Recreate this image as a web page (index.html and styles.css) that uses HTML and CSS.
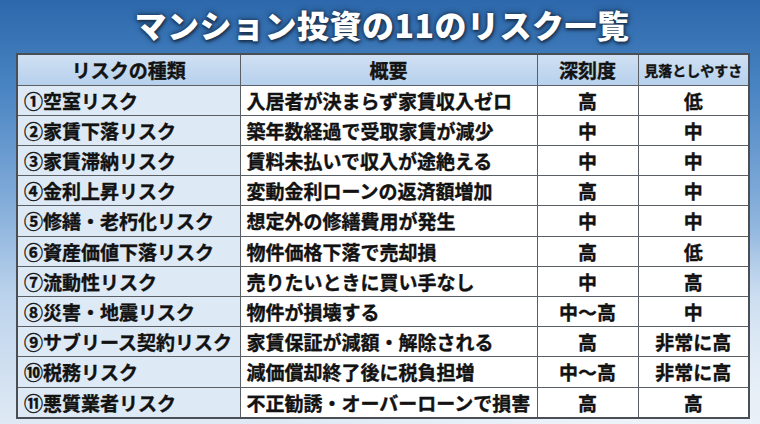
FILE: index.html
```html
<!DOCTYPE html>
<html lang="ja">
<head>
<meta charset="utf-8">
<link rel="stylesheet" href="styles.css">
</head>
<body>
<div class="page">
  <h1 class="title">マンション投資の11のリスク一覧</h1>
  <table class="risk">
    <colgroup>
      <col class="w1"><col class="w2"><col class="w3"><col class="w4">
    </colgroup>
    <thead>
      <tr>
        <th>リスクの種類</th>
        <th>概要</th>
        <th>深刻度</th>
        <th class="small">見落としやすさ</th>
      </tr>
    </thead>
    <tbody>
      <tr><td class="c1">①空室リスク</td><td class="c2">入居者が決まらず家賃収入ゼロ</td><td class="c3">高</td><td class="c4">低</td></tr>
      <tr><td class="c1">②家賃下落リスク</td><td class="c2">築年数経過で受取家賃が減少</td><td class="c3">中</td><td class="c4">中</td></tr>
      <tr><td class="c1">③家賃滞納リスク</td><td class="c2">賃料未払いで収入が途絶える</td><td class="c3">中</td><td class="c4">中</td></tr>
      <tr><td class="c1">④金利上昇リスク</td><td class="c2">変動金利ローンの返済額増加</td><td class="c3">高</td><td class="c4">中</td></tr>
      <tr><td class="c1">⑤修繕・老朽化リスク</td><td class="c2">想定外の修繕費用が発生</td><td class="c3">中</td><td class="c4">中</td></tr>
      <tr><td class="c1">⑥資産価値下落リスク</td><td class="c2">物件価格下落で売却損</td><td class="c3">高</td><td class="c4">低</td></tr>
      <tr><td class="c1">⑦流動性リスク</td><td class="c2">売りたいときに買い手なし</td><td class="c3">中</td><td class="c4">高</td></tr>
      <tr><td class="c1">⑧災害・地震リスク</td><td class="c2">物件が損壊する</td><td class="c3">中～高</td><td class="c4">中</td></tr>
      <tr><td class="c1">⑨サブリース契約リスク</td><td class="c2">家賃保証が減額・解除される</td><td class="c3">高</td><td class="c4">非常に高</td></tr>
      <tr><td class="c1">⑩税務リスク</td><td class="c2">減価償却終了後に税負担増</td><td class="c3">中～高</td><td class="c4">非常に高</td></tr>
      <tr><td class="c1">⑪悪質業者リスク</td><td class="c2">不正勧誘・オーバーローンで損害</td><td class="c3">高</td><td class="c4">高</td></tr>
    </tbody>
  </table>
</div>
</body>
</html>
```

FILE: styles.css
```css
html, body {
  margin: 0;
  padding: 0;
}
body {
  width: 760px;
  height: 424px;
  overflow: hidden;
  font-family: "Noto Sans CJK JP", "Noto Sans", sans-serif;
}
.page {
  width: 760px;
  height: 424px;
  box-sizing: border-box;
  padding: 0 12px 0 16px;
  background:
    radial-gradient(ellipse 70% 60% at 85% 95%, rgba(240,245,250,0.9), rgba(240,245,250,0) 70%),
    linear-gradient(180deg, #2c68ab 0%, #4883c2 20%, #7ca8d7 45%, #bcd3ec 70%, #dfe9f4 100%);
  display: flex;
  flex-direction: column;
}
.title {
  margin: 0;
  height: 53px;
  line-height: 48px;
  text-align: center;
  font-size: 32px;
  font-weight: 900;
  color: #ffffff;
  letter-spacing: 0.5px;
  text-shadow: 0 0 3px #1c3553, 1px 2px 3px #1c3553, 0 0 6px rgba(20,40,70,0.8);
}
.risk {
  width: 732px;
  height: 366px;
  border-collapse: collapse;
  table-layout: fixed;
  border: 2px solid #4a4f55;
  font-size: 19px;
  font-weight: 700;
  color: #121212;
  -webkit-text-stroke: 0.35px #121212;
}
.w1 { width: 223px; }
.w2 { width: 297px; }
.w3 { width: 101px; }
.w4 { width: 111px; }
.risk th,
.risk td {
  box-sizing: border-box;
  border: 1px solid #5a5f66;
  padding: 0 6px;
  white-space: nowrap;
  overflow: hidden;
  line-height: 1;
}
.risk th {
  height: 31px;
  background: linear-gradient(180deg, #cfe0f2 0%, #b6d0ec 100%);
  text-align: center;
  font-size: 19px;
}
.risk th.small {
  font-size: 14px;
  padding: 0;
}
.risk td {
  background: #ffffff;
}
.risk td.c1 {
  background: #dde9f5;
  text-align: left;
}
.risk td.c2 { text-align: left; }
.risk td.c3, .risk td.c4 {
  text-align: center;
  padding: 0;
}
```
